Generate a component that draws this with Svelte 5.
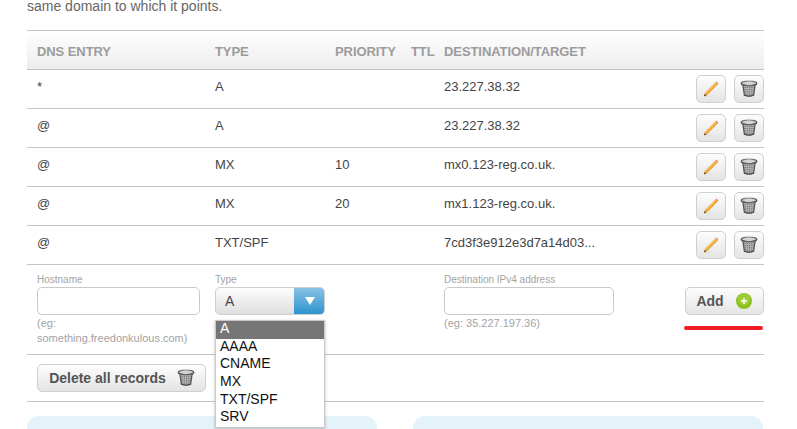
<script>
  const records = [
    { host: '*', type: 'A', priority: '', dest: '23.227.38.32' },
    { host: '@', type: 'A', priority: '', dest: '23.227.38.32' },
    { host: '@', type: 'MX', priority: '10', dest: 'mx0.123-reg.co.uk.' },
    { host: '@', type: 'MX', priority: '20', dest: 'mx1.123-reg.co.uk.' },
    { host: '@', type: 'TXT/SPF', priority: '', dest: '7cd3f3e912e3d7a14d03...' }
  ];
  const options = ['A', 'AAAA', 'CNAME', 'MX', 'TXT/SPF', 'SRV'];
</script>

{#snippet trash(size)}
  <svg class="icon" width={size} height={size} viewBox="0 0 20 20">
    <defs>
      <linearGradient id="tb" x1="0" x2="1" y1="0" y2="0">
        <stop offset="0" stop-color="#555" />
        <stop offset="0.5" stop-color="#a8a8a8" />
        <stop offset="1" stop-color="#4f4f4f" />
      </linearGradient>
      <pattern id="mesh" width="2" height="2" patternUnits="userSpaceOnUse">
        <rect width="2" height="2" fill="#b4b4b4" />
        <rect width="1" height="1" fill="#666" />
      </pattern>
    </defs>
    <path d="M3.2 5.5 L5 17.6 Q10 19.6 15 17.6 L16.8 5.5 Z" fill="url(#mesh)" />
    <path d="M3.2 5.5 L5 17.6 M16.8 5.5 L15 17.6" stroke="#555" stroke-width="1.4" fill="none" />
    <ellipse cx="10" cy="3.8" rx="8.6" ry="2.5" fill="#d4d4d4" stroke="url(#tb)" stroke-width="1.5" />
    <path d="M2.4 4.6 Q10 8.2 17.6 4.6" fill="none" stroke="#5e5e5e" stroke-width="1.3" />
    <path d="M5 16.8 Q10 19 15 16.8" fill="none" stroke="#4a4a4a" stroke-width="1.4" />
  </svg>
{/snippet}

{#snippet pencil()}
  <svg class="icon" width="16" height="18" viewBox="0 0 16 18">
    <ellipse cx="5" cy="16.4" rx="4.5" ry="0.8" fill="#e2e2e2" />
    <path d="M1.4 15.8 L2.2 13 L12.8 2.4 L14.6 4.2 L4 14.9 Z" fill="#f4a62a" stroke="#df8d14" stroke-width="0.5" />
    <path d="M3 13.2 L13 3.2" stroke="#fcd98e" stroke-width="0.8" />
    <path d="M12.8 2.4 L13.6 1.6 L15.4 3.4 L14.6 4.2 Z" fill="#e58c6a" />
    <path d="M1.2 16.2 L1.7 14.3 L3.1 15.7 Z" fill="#222" />
  </svg>
{/snippet}

<main class="page">
  <p class="intro">same domain to which it points.</p>

  <section class="dns">
    <div class="row head">
      <span>DNS ENTRY</span>
      <span>TYPE</span>
      <span>PRIORITY</span>
      <span>TTL</span>
      <span>DESTINATION/TARGET</span>
    </div>

    {#each records as r}
      <div class="row rec">
        <span>{r.host}</span>
        <span>{r.type}</span>
        <span>{r.priority}</span>
        <span></span>
        <span>{r.dest}</span>
        <div class="actions">
          <button class="btn sq" aria-label="Edit">{@render pencil()}</button>
          <button class="btn sq" aria-label="Delete">{@render trash(18)}</button>
        </div>
      </div>
    {/each}

    <div class="row form">
      <div class="field">
        <span class="lbl">Hostname</span>
        <div class="input host"></div>
        <span class="hint">(eg:<br />something.freedonkulous.com)</span>
      </div>
      <div class="field type">
        <span class="lbl">Type</span>
        <div class="select">
          <span class="val">A</span>
          <span class="arrow"><i></i></span>
        </div>
        <ul class="menu">
          {#each options as o, i}
            <li class:sel={i === 0}>{o}</li>
          {/each}
        </ul>
      </div>
      <div class="field dest">
        <span class="lbl">Destination IPv4 address</span>
        <div class="input ip"></div>
        <span class="hint">(eg: 35.227.197.36)</span>
      </div>
      <div class="add">
        <button class="btn addbtn">
          Add
          <svg width="16" height="16" viewBox="0 0 16 16">
            <circle cx="8" cy="8" r="8" fill="#8cc21f" />
            <circle cx="8" cy="6" r="6" fill="#a8d548" opacity="0.6" />
            <path d="M8 5v6M5 8h6" stroke="#eef7d6" stroke-width="2" />
          </svg>
        </button>
        <div class="mark"></div>
      </div>
    </div>

    <div class="bulk">
      <button class="btn delall">
        Delete all records
        {@render trash(18)}
      </button>
    </div>
  </section>

  <div class="panels">
    <div class="panel"></div>
    <div class="panel"></div>
  </div>
</main>

<style>
  :global(html), :global(body) {
    margin: 0;
    height: 429px;
    overflow: hidden;
    background: #fff;
  }
  .page {
    width: 737px;
    margin-left: 27px;
    font-family: "Liberation Sans", Arial, sans-serif;
    color: #444;
  }
  .intro {
    margin: 0 0 18px;
    height: 12px;
    font-size: 14px;
    line-height: 12px;
    color: #666;
  }
  .dns {
    border-top: 1px solid #c4c4c4;
  }
  .row {
    display: grid;
    grid-template-columns: 178px 120px 76px 33px 1fr auto;
    padding-left: 10px;
    border-bottom: 1px solid #c4c4c4;
    box-sizing: border-box;
  }
  .head {
    height: 39px;
    align-items: center;
    font-size: 13px;
    font-weight: bold;
    letter-spacing: -0.08px;
    color: #9c9c9c;
    background: linear-gradient(#fff, #ececec);
    padding-top: 3px;
  }
  .rec {
    height: 39px;
    font-size: 13px;
    line-height: 15px;
    color: #444;
    padding-top: 9px;
  }
  .actions {
    display: flex;
    gap: 8px;
    margin-top: -4px;
  }
  .btn {
    border: 1px solid #cfcfcf;
    border-radius: 5px;
    background: linear-gradient(#fdfdfd, #e4e4e4);
    padding: 0;
    margin: 0;
    font-family: inherit;
    display: flex;
    align-items: center;
    justify-content: center;
    box-sizing: border-box;
  }
  .sq {
    width: 30px;
    height: 28px;
  }
  .icon {
    display: block;
  }
  .form {
    display: flex;
    height: 90px;
    position: relative;
    padding-top: 9px;
  }
  .field {
    display: flex;
    flex-direction: column;
    align-items: flex-start;
    position: relative;
  }
  .field:first-child {
    width: 178px;
  }
  .field.type {
    width: 229px;
  }
  .field.dest {
    width: 241px;
  }
  .lbl {
    font-size: 10px;
    line-height: 12px;
    color: #a3a3a3;
    margin-bottom: 1px;
  }
  .input {
    height: 28px;
    border: 1px solid #c9c9c9;
    border-radius: 5px;
    box-sizing: border-box;
    background: #fff;
  }
  .host {
    width: 163px;
  }
  .ip {
    width: 170px;
  }
  .hint {
    font-size: 11px;
    line-height: 15px;
    color: #a3a3a3;
    margin-top: 1px;
    white-space: nowrap;
  }
  .select {
    width: 110px;
    height: 28px;
    display: flex;
    border: 1px solid #cfcfcf;
    border-radius: 5px;
    box-sizing: border-box;
    background: linear-gradient(#fdfdfd, #dedede);
    overflow: hidden;
    font-size: 14px;
  }
  .val {
    flex: 1;
    padding-left: 9px;
    line-height: 26px;
    color: #444;
  }
  .arrow {
    width: 31px;
    margin: -1px;
    background: linear-gradient(#8cc3e4, #2a93cf);
    display: flex;
    align-items: center;
    justify-content: center;
  }
  .arrow i {
    width: 0;
    height: 0;
    border-left: 5.5px solid transparent;
    border-right: 5.5px solid transparent;
    border-top: 8px solid #fff;
  }
  .menu {
    position: absolute;
    left: 0;
    top: 46px;
    width: 110px;
    margin: 0;
    padding: 0;
    list-style: none;
    box-sizing: border-box;
    border: 1px solid #c8c8c8;
    box-shadow: 0 1px 3px rgba(0, 0, 0, 0.25);
    background: #fff;
    font-size: 14px;
    line-height: 15px;
    color: #111;
    z-index: 2;
  }
  .menu li {
    padding-left: 4px;
    height: 17.67px;
  }
  .menu li.sel {
    background: #767676;
    color: #fff;
  }
  .add {
    position: relative;
    margin-left: auto;
    padding-top: 13px;
  }
  .addbtn {
    width: 79px;
    height: 28px;
    gap: 12px;
    padding-right: 1px;
    font-size: 14px;
    font-weight: bold;
    color: #555;
  }
  .mark {
    position: absolute;
    left: -1px;
    top: 52px;
    width: 79px;
    height: 4px;
    border-radius: 2px;
    background: #ee1c25;
  }
  .bulk {
    height: 47px;
    padding: 9px 0 0 10px;
    box-sizing: border-box;
    border-bottom: 1px solid #c4c4c4;
  }
  .delall {
    width: 169px;
    height: 28px;
    gap: 11px;
    padding-left: 1px;
    font-size: 14px;
    font-weight: bold;
    color: #555;
  }
  .panels {
    display: flex;
    gap: 36px;
    margin-top: 14px;
  }
  .panel {
    width: 350px;
    height: 13px;
    background: #e4f2fa;
    border-radius: 12px 12px 0 0;
  }
</style>
